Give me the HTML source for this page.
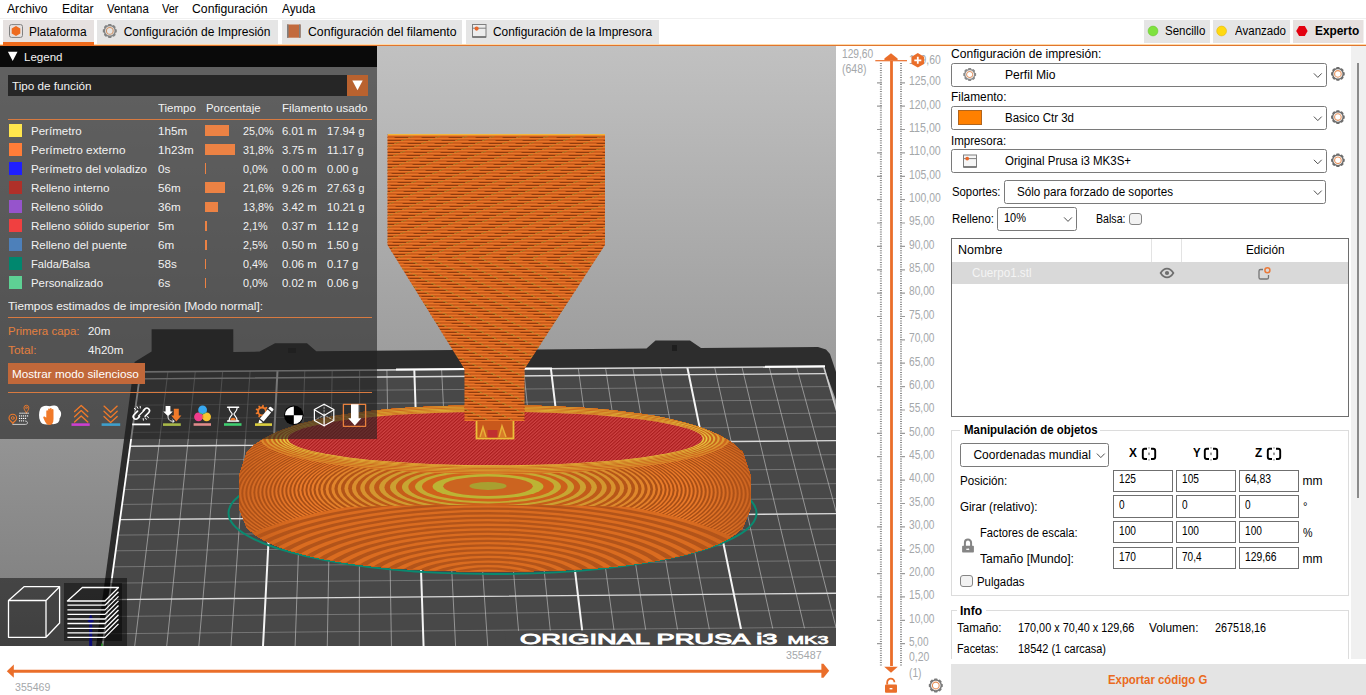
<!DOCTYPE html>
<html lang="es"><head><meta charset="utf-8"><title>PrusaSlicer</title>
<style>
html,body{margin:0;padding:0;background:#fff;overflow:hidden}
body{width:1366px;height:695px;position:relative;font-family:"Liberation Sans",sans-serif}
.t{position:absolute;white-space:pre;line-height:1em;transform-origin:0 50%;font-family:"Liberation Sans",sans-serif}
</style></head><body>
<div style="position:absolute;left:0;top:0;width:1366px;height:18px;background:#fff"></div>
<span class="t" style="left:7.0px;top:2.54px;font-size:12px;color:#000;transform:scaleX(1.0146);">Archivo</span>
<span class="t" style="left:62.3px;top:2.54px;font-size:12px;color:#000;transform:scaleX(1.0045);">Editar</span>
<span class="t" style="left:106.5px;top:2.54px;font-size:12px;color:#000;transform:scaleX(0.9467);">Ventana</span>
<span class="t" style="left:162.0px;top:2.54px;font-size:12px;color:#000;transform:scaleX(0.9159);">Ver</span>
<span class="t" style="left:192.4px;top:2.54px;font-size:12px;color:#000;transform:scaleX(1.0196);">Configuración</span>
<span class="t" style="left:282.3px;top:2.54px;font-size:12px;color:#000;transform:scaleX(0.9848);">Ayuda</span>
<div style="position:absolute;left:0;top:18px;width:1366px;height:1px;background:#f0f0f0"></div>
<div style="position:absolute;left:0;top:19px;width:1366px;height:27px;background:#fff"></div>
<div style="position:absolute;left:0;top:44px;width:1366px;height:1px;background:#ffd9a8"></div>
<div style="position:absolute;left:0;top:45px;width:1366px;height:1px;background:#e0752e"></div>
<div style="position:absolute;left:3.0px;top:20px;width:91.0px;height:24px;background:#e6e1e0"></div>
<div style="position:absolute;left:97.0px;top:20px;width:181.0px;height:24px;background:#e5e5e5"></div>
<div style="position:absolute;left:281.5px;top:20px;width:180.5px;height:24px;background:#e5e5e5"></div>
<div style="position:absolute;left:466.0px;top:20px;width:193.0px;height:24px;background:#e5e5e5"></div>
<div style="position:absolute;left:3px;top:42.3px;width:91px;height:3.4px;background:#ee6a1c"></div>
<span class="t" style="left:29.2px;top:25.74px;font-size:12px;color:#000;transform:scaleX(0.9926);">Plataforma</span>
<span class="t" style="left:123.7px;top:25.74px;font-size:12px;color:#000;">Configuración de Impresión</span>
<span class="t" style="left:307.5px;top:25.74px;font-size:12px;color:#000;transform:scaleX(1.0212);">Configuración del filamento</span>
<span class="t" style="left:492.5px;top:25.74px;font-size:12px;color:#000;transform:scaleX(0.9890);">Configuración de la Impresora</span>
<svg style="position:absolute;left:0;top:0" width="1366" height="695" viewBox="0 0 1366 695">
<rect x="9.5" y="24.6" width="13" height="12.8" rx="2" fill="none" stroke="#808080" stroke-width="1"/>
<polygon points="20.3,33.4 16.0,35.9 11.7,33.4 11.7,28.4 16.0,25.9 20.3,28.4" fill="#ee6b1f"/>
<g transform="translate(109.8 30.9)" ><path d="M-1.96 -5.72 L-1.35 -7.00 L1.35 -7.00 L1.96 -5.72 L2.66 -5.43 L4.00 -5.90 L5.90 -4.00 L5.43 -2.66 L5.72 -1.96 L7.00 -1.35 L7.00 1.35 L5.72 1.96 L5.43 2.66 L5.90 4.00 L4.00 5.90 L2.66 5.43 L1.96 5.72 L1.35 7.00 L-1.35 7.00 L-1.96 5.72 L-2.66 5.43 L-4.00 5.90 L-5.90 4.00 L-5.43 2.66 L-5.72 1.96 L-7.00 1.35 L-7.00 -1.35 L-5.72 -1.96 L-5.43 -2.66 L-5.90 -4.00 L-4.00 -5.90 L-2.66 -5.43Z M4.72 0A4.72 4.72 0 1 0 -4.72 0A4.72 4.72 0 1 0 4.72 0Z" fill="#828383" fill-rule="evenodd"/><circle r="3.38" fill="none" stroke="#cf9468" stroke-width="1.12" /></g>
<rect x="287" y="24.5" width="13.6" height="13.2" fill="#c26a3d"/><rect x="287" y="24.5" width="1.6" height="13.2" fill="#808080"/><rect x="299" y="24.5" width="1.6" height="13.2" fill="#808080"/>
<rect x="472.5" y="24.5" width="13.5" height="12.5" fill="#ececec" stroke="#7e7e7e" stroke-width="1"/><path d="M472.5 28.2H486" stroke="#7e7e7e" stroke-width="1"/><circle cx="476.6" cy="28.6" r="2.1" fill="#e8672a"/><path d="M472.5 37H486" stroke="#666" stroke-width="1.4"/>
<rect x="1144.0" y="20" width="66.0" height="23" fill="#e5e5e5"/>
<rect x="1213.0" y="20" width="77.0" height="23" fill="#e5e5e5"/>
<rect x="1293.0" y="20" width="70.5" height="23" fill="#e6e0df"/>
<circle cx="1153" cy="31" r="4.9" fill="#7fe23e" stroke="#6cc436" stroke-width="0.6"/>
<circle cx="1221.6" cy="31" r="4.9" fill="#ffd910" stroke="#e2b714" stroke-width="0.6"/>
<polygon points="1307.6,31.0 1304.8,35.9 1299.1,35.9 1296.2,31.0 1299.1,26.1 1304.8,26.1" fill="#e3000f"/>
</svg>
<span class="t" style="left:1165.4px;top:25.34px;font-size:12px;color:#000;transform:scaleX(0.9588);">Sencillo</span>
<span class="t" style="left:1234.5px;top:25.34px;font-size:12px;color:#000;transform:scaleX(0.9594);">Avanzado</span>
<span class="t" style="left:1315.2px;top:25.34px;font-size:12px;color:#000;font-weight:700;transform:scaleX(0.9891);">Experto</span>
<svg width="836" height="600" viewBox="0 46 836 600" style="position:absolute;left:0;top:46px;display:block">
<defs>
<linearGradient id="bg" x1="0" y1="46" x2="0" y2="645" gradientUnits="userSpaceOnUse"><stop offset="0" stop-color="#c1c1c1"/><stop offset="1" stop-color="#7c7c7c"/></linearGradient>
<pattern id="st" width="8" height="3" patternUnits="userSpaceOnUse"><rect width="8" height="3" fill="#ce5e1c"/><rect width="8" height="1" fill="#ea7629"/><rect y="2" width="8" height="1" fill="#8e3c0e"/></pattern>
<pattern id="dg" width="27" height="3" patternUnits="userSpaceOnUse" patternTransform="skewX(-66.8)"><rect x="0" y="1" width="2.5" height="2" fill="#b07c26"/><rect x="2.5" y="2" width="11" height="1" fill="#cc5e1c"/></pattern>
<pattern id="dg2" width="25" height="3" patternUnits="userSpaceOnUse" patternTransform="skewX(64)"><rect x="0" y="1" width="2.5" height="2" fill="#b07c26"/><rect x="2.5" y="2" width="11" height="1" fill="#cc5e1c"/></pattern>
<clipPath id="fup"><rect x="380" y="130" width="240" height="128"/></clipPath><clipPath id="flo"><rect x="380" y="258" width="240" height="170"/></clipPath>
<pattern id="redp" width="2.4" height="3" patternUnits="userSpaceOnUse" patternTransform="rotate(48)"><rect width="2.4" height="3" fill="#cf4444"/><rect width="1.15" height="3" fill="#a81c1c"/></pattern>
<radialGradient id="moire" cx="494" cy="485" r="260" gradientUnits="userSpaceOnUse" gradientTransform="translate(494 485) scale(1 0.22) translate(-494 -485)" spreadMethod="repeat">
</radialGradient>
<clipPath id="bodyclip"><path id="bodypath" d="M239.0 476.0 L247.0 452.3 L255.0 444.6 L263.0 439.2 L271.0 434.9 L279.0 431.3 L287.0 428.3 L295.0 425.6 L302.9 423.2 L310.9 421.2 L318.9 419.3 L326.9 417.6 L334.9 416.1 L342.9 414.7 L350.9 413.5 L358.9 412.4 L366.9 411.4 L374.9 410.5 L382.9 409.7 L390.9 409.0 L398.9 408.4 L406.9 407.8 L414.9 407.3 L422.9 406.9 L430.9 406.6 L438.8 406.3 L446.8 406.0 L454.8 405.8 L462.8 405.7 L470.8 405.6 L478.8 405.5 L486.8 405.5 L494.8 405.5 L502.8 405.5 L510.8 405.5 L518.8 405.6 L526.8 405.7 L534.8 405.8 L542.8 406.0 L550.8 406.3 L558.8 406.6 L566.7 406.9 L574.7 407.3 L582.7 407.8 L590.7 408.4 L598.7 409.0 L606.7 409.7 L614.7 410.5 L622.7 411.4 L630.7 412.4 L638.7 413.5 L646.7 414.7 L654.7 416.1 L662.7 417.6 L670.7 419.3 L678.7 421.2 L686.7 423.2 L694.6 425.6 L702.6 428.3 L710.6 431.3 L718.6 434.9 L726.6 439.2 L734.6 444.6 L742.6 452.3 L750.6 476.0 L750.6 508.0 L742.6 528.0 L734.6 534.8 L726.6 539.7 L718.6 543.6 L710.6 546.9 L702.6 549.7 L694.6 552.1 L686.7 554.3 L678.7 556.3 L670.7 558.0 L662.7 559.6 L654.7 561.0 L646.7 562.3 L638.7 563.5 L630.7 564.6 L622.7 565.5 L614.7 566.4 L606.7 567.2 L598.7 567.9 L590.7 568.5 L582.7 569.1 L574.7 569.6 L566.7 570.0 L558.8 570.3 L550.8 570.7 L542.8 570.9 L534.8 571.1 L526.8 571.3 L518.8 571.4 L510.8 571.5 L502.8 571.5 L494.8 571.5 L486.8 571.5 L478.8 571.5 L470.8 571.4 L462.8 571.3 L454.8 571.1 L446.8 570.9 L438.8 570.7 L430.9 570.3 L422.9 570.0 L414.9 569.6 L406.9 569.1 L398.9 568.5 L390.9 567.9 L382.9 567.2 L374.9 566.4 L366.9 565.5 L358.9 564.6 L350.9 563.5 L342.9 562.3 L334.9 561.0 L326.9 559.6 L318.9 558.0 L310.9 556.3 L302.9 554.3 L295.0 552.1 L287.0 549.7 L279.0 546.9 L271.0 543.6 L263.0 539.7 L255.0 534.8 L247.0 528.0 L239.0 508.0Z"/></clipPath>
<clipPath id="lowclip"><path d="M230 512 Q488 498 760 512 V585 H230Z"/></clipPath><clipPath id="vp"><rect x="0" y="46" width="836" height="600"/></clipPath>
<linearGradient id="sideshade" x1="238" y1="0" x2="751" y2="0" gradientUnits="userSpaceOnUse"><stop offset="0" stop-color="#b4541a" stop-opacity="0.55"/><stop offset="0.12" stop-color="#b4541a" stop-opacity="0"/><stop offset="0.88" stop-color="#b4541a" stop-opacity="0"/><stop offset="1" stop-color="#b4541a" stop-opacity="0.55"/></linearGradient></defs>
<rect x="0" y="46" width="836" height="600" fill="url(#bg)"/>
<polygon fill="#2d2d2d" points="134.5,362.0 151.6,351.5 151.6,329.2 233.3,329.2 233.3,351.9 259.7,351.6 275.0,343.2 307.0,343.2 316.3,351.2 646.5,348.5 655.5,340.5 690.0,340.5 701.0,348.0 818.0,347.1 826.0,349.5 830.0,354.0 836.0,372.0 836.0,400.0 823.7,366.6 140.4,371.9"/>
<polygon fill="#2b2b2b" points="134.5,362.0 140.4,371.9 102.3,648.0 95.8,648.0"/>
<rect x="288" y="348" width="8" height="5" fill="#1e1e1e"/><rect x="672" y="345" width="5" height="6" fill="#1e1e1e"/>
<g clip-path="url(#vp)">
<polygon fill="#484848" points="140.4,371.9 823.7,366.6 839.2,420.0 836.0,420.0 836.0,648.0 102.3,648.0"/>
<path d="M167.9 371.6L134.2 650.0M195.3 371.4L166.3 650.0M222.7 371.2L198.5 650.0M250.1 371.0L230.7 650.0M304.8 370.6L295.0 650.0M332.2 370.4L327.2 650.0M359.6 370.2L359.3 650.0M386.9 370.0L391.5 650.0M441.6 369.5L455.8 650.0M469.0 369.3L488.0 650.0M496.3 369.1L520.2 650.0M523.6 368.9L552.3 650.0M578.3 368.5L616.7 650.0M605.6 368.3L648.8 650.0M632.9 368.1L681.0 650.0M660.1 367.9L713.2 650.0M714.7 367.4L777.5 650.0M742.0 367.2L809.7 650.0M769.2 367.0L841.8 650.0M796.5 366.8L874.0 650.0" stroke="#c4c4c4" stroke-width="1" fill="none" opacity="0.62"/>
<path d="M99.4 669.2L909.6 661.8M101.8 651.3L904.4 644.1M104.3 633.8L899.4 626.6M106.6 616.5L894.4 609.6M111.3 583.1L884.7 576.3M113.5 566.8L880.0 560.2M115.7 550.8L875.4 544.3M117.9 535.1L870.9 528.7M122.1 504.4L862.0 498.3M124.2 489.5L857.7 483.5M126.2 474.9L853.5 468.9M128.2 460.5L849.3 454.6M132.1 432.4L841.2 426.7M134.0 418.7L837.3 413.1M135.8 405.2L833.4 399.8M137.7 392.0L829.5 386.6" stroke="#c4c4c4" stroke-width="1" fill="none" opacity="0.36"/>
<path d="M109.0 599.6L889.5 592.8M120.0 519.6L866.4 513.4M130.2 446.3L845.2 440.6M139.5 378.9L825.8 373.6" stroke="#dadada" stroke-width="1.4" fill="none"/>
<path d="M277.5 370.8L262.8 650.0M414.3 369.8L423.7 650.0M550.9 368.7L584.5 650.0M687.4 367.7L745.3 650.0" stroke="#f4f4f4" stroke-width="2" fill="none"/>
<path d="M140.4 371.9L823.7 366.6" stroke="#d8d8d8" stroke-width="1.6"/>
<path d="M140.4 371.9L102.0 650.0" stroke="#ffffff" stroke-width="1.8"/>
<path d="M823.7 366.6L842.2 430.0" stroke="#cfcfcf" stroke-width="1.6"/>
<path d="M396.0 369.6L464.0 369.1" stroke="#ffffff" stroke-width="2"/>
<path d="M524.0 368.6L552.0 368.4" stroke="#ffffff" stroke-width="2"/>
<path d="M765.0 366.8L825.0 366.3" stroke="#ffffff" stroke-width="2"/>
<polygon fill="#484848" points="504.8,631.0 904.4,627.4 911.7,652.0 506.4,652.0"/>
<text x="520" y="644" font-family="Liberation Sans, sans-serif" font-weight="400" font-size="14.5" fill="#fff" stroke="#fff" stroke-width="0.85" textLength="257.5" lengthAdjust="spacingAndGlyphs">ORIGINAL PRUSA i3</text>
<text x="787.5" y="644" font-family="Liberation Sans, sans-serif" font-weight="400" font-size="11.8" fill="#fff" stroke="#fff" stroke-width="0.7" textLength="41" lengthAdjust="spacingAndGlyphs">MK3</text>
</g>
<ellipse cx="492.5" cy="513" rx="264" ry="61" fill="none" stroke="#0a8a70" stroke-width="2"/>
<g clip-path="url(#bodyclip)">
<rect x="230" y="400" width="530" height="180" fill="#d9691f"/>
<ellipse cx="488" cy="507.2" rx="420.7" ry="158.5" fill="#ea7a2a"/>
<ellipse cx="488" cy="507.0" rx="418.7" ry="157.4" fill="#a64e16"/>
<ellipse cx="488" cy="506.8" rx="416.7" ry="156.3" fill="#ea7a2a"/>
<ellipse cx="488" cy="506.6" rx="414.7" ry="155.2" fill="#a64e16"/>
<ellipse cx="488" cy="506.4" rx="412.7" ry="154.1" fill="#ea7a2a"/>
<ellipse cx="488" cy="506.2" rx="410.7" ry="153.0" fill="#a64e16"/>
<ellipse cx="488" cy="506.0" rx="408.7" ry="151.9" fill="#ea7a2a"/>
<ellipse cx="488" cy="505.8" rx="406.7" ry="150.8" fill="#a64e16"/>
<ellipse cx="488" cy="505.7" rx="404.7" ry="149.7" fill="#ea7a2a"/>
<ellipse cx="488" cy="505.5" rx="402.7" ry="148.7" fill="#a64e16"/>
<ellipse cx="488" cy="505.3" rx="400.7" ry="147.6" fill="#ea7a2a"/>
<ellipse cx="488" cy="505.1" rx="398.7" ry="146.5" fill="#a64e16"/>
<ellipse cx="488" cy="504.9" rx="396.7" ry="145.4" fill="#ea7a2a"/>
<ellipse cx="488" cy="504.7" rx="394.7" ry="144.4" fill="#a64e16"/>
<ellipse cx="488" cy="504.5" rx="392.7" ry="143.3" fill="#ea7a2a"/>
<ellipse cx="488" cy="504.3" rx="390.7" ry="142.3" fill="#a64e16"/>
<ellipse cx="488" cy="504.1" rx="388.7" ry="141.2" fill="#ea7a2a"/>
<ellipse cx="488" cy="503.9" rx="386.7" ry="140.1" fill="#a64e16"/>
<ellipse cx="488" cy="503.8" rx="384.7" ry="139.1" fill="#ea7a2a"/>
<ellipse cx="488" cy="503.6" rx="382.7" ry="138.1" fill="#a64e16"/>
<ellipse cx="488" cy="503.4" rx="380.7" ry="137.0" fill="#ea7a2a"/>
<ellipse cx="488" cy="503.2" rx="378.7" ry="136.0" fill="#a64e16"/>
<ellipse cx="488" cy="503.0" rx="376.7" ry="134.9" fill="#ea7a2a"/>
<ellipse cx="488" cy="502.8" rx="374.7" ry="133.9" fill="#a64e16"/>
<ellipse cx="488" cy="502.7" rx="372.7" ry="132.9" fill="#ea7a2a"/>
<ellipse cx="488" cy="502.5" rx="370.7" ry="131.9" fill="#a64e16"/>
<ellipse cx="488" cy="502.3" rx="368.7" ry="130.8" fill="#ea7a2a"/>
<ellipse cx="488" cy="502.1" rx="366.7" ry="129.8" fill="#a64e16"/>
<ellipse cx="488" cy="502.0" rx="364.7" ry="128.8" fill="#ea7a2a"/>
<ellipse cx="488" cy="501.8" rx="362.7" ry="127.8" fill="#a64e16"/>
<ellipse cx="488" cy="501.6" rx="360.7" ry="126.8" fill="#ea7a2a"/>
<ellipse cx="488" cy="501.4" rx="358.7" ry="125.8" fill="#a64e16"/>
<ellipse cx="488" cy="501.3" rx="356.7" ry="124.8" fill="#ea7a2a"/>
<ellipse cx="488" cy="501.1" rx="354.7" ry="123.8" fill="#a64e16"/>
<ellipse cx="488" cy="500.9" rx="352.7" ry="122.8" fill="#ea7a2a"/>
<ellipse cx="488" cy="500.8" rx="350.7" ry="121.8" fill="#a64e16"/>
<ellipse cx="488" cy="500.6" rx="348.7" ry="120.8" fill="#ea7a2a"/>
<ellipse cx="488" cy="500.4" rx="346.7" ry="119.8" fill="#a64e16"/>
<ellipse cx="488" cy="500.3" rx="344.7" ry="118.8" fill="#ea7a2a"/>
<ellipse cx="488" cy="500.1" rx="342.7" ry="117.9" fill="#a64e16"/>
<ellipse cx="488" cy="499.9" rx="340.7" ry="116.9" fill="#ea7a2a"/>
<ellipse cx="488" cy="499.8" rx="338.7" ry="115.9" fill="#a64e16"/>
<ellipse cx="488" cy="499.6" rx="336.7" ry="115.0" fill="#ea7a2a"/>
<ellipse cx="488" cy="499.4" rx="334.7" ry="114.0" fill="#a64e16"/>
<ellipse cx="488" cy="499.3" rx="332.7" ry="113.0" fill="#ea7a2a"/>
<ellipse cx="488" cy="499.1" rx="330.7" ry="112.1" fill="#a64e16"/>
<ellipse cx="488" cy="499.0" rx="328.7" ry="111.1" fill="#ea7a2a"/>
<ellipse cx="488" cy="498.8" rx="326.7" ry="110.2" fill="#a64e16"/>
<ellipse cx="488" cy="498.7" rx="324.7" ry="109.2" fill="#ea7a2a"/>
<ellipse cx="488" cy="498.5" rx="322.7" ry="108.3" fill="#a64e16"/>
<ellipse cx="488" cy="498.3" rx="320.7" ry="107.3" fill="#ea7a2a"/>
<ellipse cx="488" cy="498.2" rx="318.7" ry="106.4" fill="#a64e16"/>
<ellipse cx="488" cy="498.0" rx="316.7" ry="105.5" fill="#ea7a2a"/>
<ellipse cx="488" cy="497.9" rx="314.7" ry="104.5" fill="#a64e16"/>
<ellipse cx="488" cy="497.7" rx="312.7" ry="103.6" fill="#ea7a2a"/>
<ellipse cx="488" cy="497.6" rx="310.7" ry="102.7" fill="#a64e16"/>
<ellipse cx="488" cy="497.4" rx="308.7" ry="101.8" fill="#ea7a2a"/>
<ellipse cx="488" cy="497.3" rx="306.7" ry="100.8" fill="#a64e16"/>
<ellipse cx="488" cy="497.1" rx="304.7" ry="99.9" fill="#ea7a2a"/>
<ellipse cx="488" cy="497.0" rx="302.7" ry="99.0" fill="#a64e16"/>
<ellipse cx="488" cy="496.9" rx="300.7" ry="98.1" fill="#ea7a2a"/>
<ellipse cx="488" cy="496.7" rx="298.7" ry="97.2" fill="#a64e16"/>
<ellipse cx="488" cy="496.6" rx="296.7" ry="96.3" fill="#ea7a2a"/>
<ellipse cx="488" cy="496.4" rx="294.7" ry="95.4" fill="#a64e16"/>
<ellipse cx="488" cy="496.3" rx="292.7" ry="94.5" fill="#ea7a2a"/>
<ellipse cx="488" cy="496.1" rx="290.7" ry="93.6" fill="#a64e16"/>
<ellipse cx="488" cy="496.0" rx="288.7" ry="92.7" fill="#ea7a2a"/>
<ellipse cx="488" cy="495.9" rx="286.7" ry="91.9" fill="#a64e16"/>
<ellipse cx="488" cy="495.7" rx="284.7" ry="91.0" fill="#ea7a2a"/>
<ellipse cx="488" cy="495.6" rx="282.7" ry="90.1" fill="#a64e16"/>
<ellipse cx="488" cy="495.5" rx="280.7" ry="89.2" fill="#ea7a2a"/>
<ellipse cx="488" cy="495.3" rx="278.7" ry="88.4" fill="#a64e16"/>
<ellipse cx="488" cy="495.2" rx="276.7" ry="87.5" fill="#ea7a2a"/>
<ellipse cx="488" cy="495.1" rx="274.7" ry="86.6" fill="#a64e16"/>
<ellipse cx="488" cy="494.9" rx="272.7" ry="85.8" fill="#ea7a2a"/>
<ellipse cx="488" cy="494.8" rx="270.7" ry="84.9" fill="#a64e16"/>
<ellipse cx="488" cy="494.7" rx="268.7" ry="84.1" fill="#ea7a2a"/>
<ellipse cx="488" cy="494.5" rx="266.7" ry="83.2" fill="#a64e16"/>
<ellipse cx="488" cy="494.4" rx="264.7" ry="82.4" fill="#ea7a2a"/>
<ellipse cx="488" cy="494.3" rx="262.7" ry="81.5" fill="#a64e16"/>
<ellipse cx="488" cy="494.2" rx="260.7" ry="80.7" fill="#ea7a2a"/>
<ellipse cx="488" cy="494.0" rx="258.7" ry="79.8" fill="#a64e16"/>
<ellipse cx="488" cy="493.9" rx="256.7" ry="79.0" fill="#ea7a2a"/>
<ellipse cx="488" cy="493.8" rx="254.7" ry="78.2" fill="#a64e16"/>
<ellipse cx="488" cy="493.7" rx="252.7" ry="77.4" fill="#ea7a2a"/>
<ellipse cx="488" cy="493.5" rx="250.7" ry="76.5" fill="#a64e16"/>
<ellipse cx="488" cy="493.4" rx="248.7" ry="75.7" fill="#ea7a2a"/>
<ellipse cx="488" cy="493.3" rx="246.7" ry="74.9" fill="#a64e16"/>
<ellipse cx="488" cy="493.2" rx="244.7" ry="74.1" fill="#ea7a2a"/>
<ellipse cx="488" cy="493.1" rx="242.7" ry="73.3" fill="#a64e16"/>
<ellipse cx="488" cy="493.0" rx="240.7" ry="72.5" fill="#ea7a2a"/>
<ellipse cx="488" cy="492.8" rx="238.7" ry="71.7" fill="#a64e16"/>
<ellipse cx="488" cy="492.7" rx="236.7" ry="70.9" fill="#ea7a2a"/>
<ellipse cx="488" cy="492.6" rx="234.7" ry="70.1" fill="#a64e16"/>
<ellipse cx="488" cy="492.5" rx="232.7" ry="69.3" fill="#ea7a2a"/>
<ellipse cx="488" cy="492.4" rx="230.7" ry="68.5" fill="#a64e16"/>
<ellipse cx="488" cy="492.3" rx="228.7" ry="67.7" fill="#ea7a2a"/>
<ellipse cx="488" cy="492.2" rx="226.7" ry="66.9" fill="#a64e16"/>
<ellipse cx="488" cy="492.1" rx="224.7" ry="66.1" fill="#ea7a2a"/>
<ellipse cx="488" cy="492.0" rx="222.7" ry="65.4" fill="#a64e16"/>
<ellipse cx="488" cy="491.8" rx="220.7" ry="64.6" fill="#ea7a2a"/>
<ellipse cx="488" cy="491.7" rx="218.7" ry="63.8" fill="#a64e16"/>
<ellipse cx="488" cy="491.6" rx="216.7" ry="63.1" fill="#ea7a2a"/>
<ellipse cx="488" cy="491.5" rx="214.7" ry="62.3" fill="#a64e16"/>
<ellipse cx="488" cy="491.4" rx="212.7" ry="61.5" fill="#ea7a2a"/>
<ellipse cx="488" cy="491.3" rx="210.7" ry="60.8" fill="#a64e16"/>
<ellipse cx="488" cy="491.2" rx="208.7" ry="60.0" fill="#ea7a2a"/>
<ellipse cx="488" cy="491.1" rx="206.7" ry="59.3" fill="#a64e16"/>
<ellipse cx="488" cy="491.0" rx="204.7" ry="58.5" fill="#ea7a2a"/>
<ellipse cx="488" cy="490.9" rx="202.7" ry="57.8" fill="#a64e16"/>
<ellipse cx="488" cy="490.8" rx="200.7" ry="57.1" fill="#ea7a2a"/>
<ellipse cx="488" cy="490.7" rx="198.7" ry="56.3" fill="#a64e16"/>
<ellipse cx="488" cy="490.6" rx="196.7" ry="55.6" fill="#ea7a2a"/>
<ellipse cx="488" cy="490.5" rx="194.7" ry="54.9" fill="#a64e16"/>
<ellipse cx="488" cy="490.5" rx="192.7" ry="54.1" fill="#ea7a2a"/>
<ellipse cx="488" cy="490.4" rx="190.7" ry="53.4" fill="#a64e16"/>
<ellipse cx="488" cy="490.3" rx="188.7" ry="52.7" fill="#ea7a2a"/>
<ellipse cx="488" cy="490.2" rx="186.7" ry="52.0" fill="#a64e16"/>
<ellipse cx="488" cy="490.1" rx="184.7" ry="51.3" fill="#ea7a2a"/>
<ellipse cx="488" cy="490.0" rx="182.7" ry="50.6" fill="#a64e16"/>
<ellipse cx="488" cy="489.9" rx="180.7" ry="49.9" fill="#ea7a2a"/>
<ellipse cx="488" cy="489.8" rx="178.7" ry="49.2" fill="#a64e16"/>
<ellipse cx="488" cy="489.7" rx="176.7" ry="48.4" fill="#e97c2a"/>
<ellipse cx="488" cy="489.7" rx="174.6" ry="47.7" fill="#a84f16"/>
<ellipse cx="488" cy="489.6" rx="172.4" ry="46.9" fill="#e77e2b"/>
<ellipse cx="488" cy="489.5" rx="170.0" ry="46.2" fill="#aa5016"/>
<ellipse cx="488" cy="489.4" rx="167.6" ry="45.3" fill="#e5802b"/>
<ellipse cx="488" cy="489.3" rx="165.1" ry="44.5" fill="#ab5117"/>
<ellipse cx="488" cy="489.2" rx="162.4" ry="43.6" fill="#e4822b"/>
<ellipse cx="488" cy="489.1" rx="159.6" ry="42.6" fill="#ae5217"/>
<ellipse cx="488" cy="488.9" rx="156.7" ry="41.7" fill="#e1852c"/>
<ellipse cx="488" cy="488.8" rx="153.6" ry="40.6" fill="#b05317"/>
<ellipse cx="488" cy="488.7" rx="150.4" ry="39.6" fill="#df882c"/>
<ellipse cx="488" cy="488.6" rx="147.1" ry="38.5" fill="#b25418"/>
<ellipse cx="488" cy="488.5" rx="143.6" ry="37.4" fill="#dd8b2d"/>
<ellipse cx="488" cy="488.3" rx="139.9" ry="36.2" fill="#b55518"/>
<ellipse cx="488" cy="488.2" rx="136.1" ry="35.0" fill="#da8e2e"/>
<ellipse cx="488" cy="488.1" rx="132.0" ry="33.7" fill="#b85618"/>
<ellipse cx="488" cy="488.0" rx="127.8" ry="32.4" fill="#d7922e"/>
<ellipse cx="488" cy="487.8" rx="123.4" ry="31.1" fill="#bb5819"/>
<ellipse cx="488" cy="487.7" rx="118.8" ry="29.7" fill="#d3962f"/>
<ellipse cx="488" cy="487.6" rx="113.9" ry="28.2" fill="#be5a19"/>
<ellipse cx="488" cy="487.4" rx="108.9" ry="26.7" fill="#d09b30"/>
<ellipse cx="488" cy="487.3" rx="103.5" ry="25.2" fill="#c25b1a"/>
<ellipse cx="488" cy="487.2" rx="98.0" ry="23.6" fill="#cca031"/>
<ellipse cx="488" cy="487.0" rx="92.2" ry="22.0" fill="#c65d1a"/>
<ellipse cx="488" cy="486.9" rx="86.1" ry="20.3" fill="#c7a632"/>
<ellipse cx="488" cy="486.8" rx="79.7" ry="18.6" fill="#cb601b"/>
<ellipse cx="488" cy="486.6" rx="73.0" ry="16.8" fill="#c3ac33"/>
<ellipse cx="488" cy="486.5" rx="66.0" ry="15.0" fill="#d0621b"/>
<ellipse cx="488" cy="486.4" rx="55.4" ry="12.4" fill="#bcb434"/>
<ellipse cx="488" cy="486.2" rx="44.8" ry="9.8" fill="#cc6420"/>
<ellipse cx="488" cy="486.0" rx="18.6" ry="3.9" fill="#a8a030"/>
<g clip-path="url(#lowclip)">
<ellipse cx="488" cy="582" rx="286.7" ry="86.0" fill="#da6c20"/>
<ellipse cx="488" cy="582" rx="279.0" ry="83.7" fill="#b2541a"/>
<ellipse cx="488" cy="582" rx="271.3" ry="81.4" fill="#da6c20"/>
<ellipse cx="488" cy="582" rx="263.7" ry="79.1" fill="#b2541a"/>
<ellipse cx="488" cy="582" rx="256.0" ry="76.8" fill="#da6c20"/>
<ellipse cx="488" cy="582" rx="248.3" ry="74.5" fill="#b2541a"/>
<ellipse cx="488" cy="582" rx="240.7" ry="72.2" fill="#da6c20"/>
<ellipse cx="488" cy="582" rx="233.0" ry="69.9" fill="#b2541a"/>
<ellipse cx="488" cy="582" rx="225.3" ry="67.6" fill="#da6c20"/>
<ellipse cx="488" cy="582" rx="217.7" ry="65.3" fill="#b2541a"/>
<ellipse cx="488" cy="582" rx="210.0" ry="63.0" fill="#da6c20"/>
<ellipse cx="488" cy="582" rx="202.3" ry="60.7" fill="#b2541a"/>
<ellipse cx="488" cy="582" rx="194.7" ry="58.4" fill="#da6c20"/>
<ellipse cx="488" cy="582" rx="187.0" ry="56.1" fill="#b2541a"/>
<ellipse cx="488" cy="582" rx="179.3" ry="53.8" fill="#da6c20"/>
<ellipse cx="488" cy="582" rx="171.7" ry="51.5" fill="#b2541a"/>
<ellipse cx="488" cy="582" rx="164.0" ry="49.2" fill="#da6c20"/>
<ellipse cx="488" cy="582" rx="156.3" ry="46.9" fill="#b2541a"/>
<ellipse cx="488" cy="582" rx="148.7" ry="44.6" fill="#da6c20"/>
<ellipse cx="488" cy="582" rx="141.0" ry="42.3" fill="#b2541a"/>
<ellipse cx="488" cy="582" rx="133.3" ry="40.0" fill="#da6c20"/>
<ellipse cx="488" cy="582" rx="125.7" ry="37.7" fill="#b2541a"/>
<ellipse cx="488" cy="582" rx="118.0" ry="35.4" fill="#da6c20"/>
<ellipse cx="488" cy="582" rx="110.3" ry="33.1" fill="#b2541a"/>
<ellipse cx="488" cy="582" rx="102.7" ry="30.8" fill="#da6c20"/>
<ellipse cx="488" cy="582" rx="95.0" ry="28.5" fill="#b2541a"/>
<ellipse cx="488" cy="582" rx="87.3" ry="26.2" fill="#da6c20"/>
<ellipse cx="488" cy="582" rx="79.7" ry="23.9" fill="#b2541a"/>
<ellipse cx="488" cy="582" rx="72.0" ry="21.6" fill="#da6c20"/>
<ellipse cx="488" cy="582" rx="64.3" ry="19.3" fill="#b2541a"/>
<ellipse cx="488" cy="582" rx="56.7" ry="17.0" fill="#da6c20"/>
<ellipse cx="488" cy="582" rx="49.0" ry="14.7" fill="#b2541a"/>
<ellipse cx="488" cy="582" rx="41.3" ry="12.4" fill="#da6c20"/>
<ellipse cx="488" cy="582" rx="33.7" ry="10.1" fill="#b2541a"/>
<ellipse cx="488" cy="582" rx="26.0" ry="7.8" fill="#da6c20"/>
<ellipse cx="488" cy="582" rx="18.3" ry="5.5" fill="#b2541a"/>
<ellipse cx="488" cy="582" rx="10.7" ry="3.2" fill="#da6c20"/>
</g>
<rect x="230" y="400" width="530" height="180" fill="url(#sideshade)"/>
</g>
<g clip-path="url(#bodyclip)">
<ellipse cx="495.2" cy="438.7" rx="234.5" ry="35.3" fill="#dc8a2c"/>
<ellipse cx="495.2" cy="438.7" rx="232.0" ry="34.5" fill="#cc661e"/>
<ellipse cx="495.2" cy="438.7" rx="229.5" ry="33.7" fill="#dc9a30"/>
<ellipse cx="495.2" cy="438.7" rx="227.0" ry="32.9" fill="#cc661e"/>
<ellipse cx="495.2" cy="438.7" rx="224.5" ry="32.2" fill="#dca634"/>
<ellipse cx="495.2" cy="438.7" rx="222.3" ry="31.5" fill="#c8601c"/>
<ellipse cx="495.2" cy="438.7" rx="220.1" ry="30.8" fill="#deb238"/>
<ellipse cx="495.2" cy="438.7" rx="218.0" ry="30.1" fill="#c8601c"/>
<ellipse cx="495.2" cy="438.7" rx="216.0" ry="29.4" fill="#e2bc3c"/>
<ellipse cx="495.2" cy="438.7" rx="214.1" ry="28.8" fill="#cc661e"/>
<ellipse cx="495.2" cy="438.7" rx="212.3" ry="28.2" fill="#e8c840"/>
<ellipse cx="495.2" cy="438.7" rx="210.6" ry="27.7" fill="#cc661e"/>
<ellipse cx="495.2" cy="438.7" rx="209.0" ry="27.2" fill="#e8c840"/>
</g>
<ellipse cx="495.2" cy="438.5" rx="207.5" ry="26.7" fill="url(#redp)"/>
<rect x="476.5" y="420" width="37" height="18.5" fill="#c8581c" stroke="#ecc03a" stroke-width="1.8"/>
<path d="M480 437L483 427L486 437M499 437L502 426L506 437" stroke="#e8b038" stroke-width="1.5" fill="#d87a28"/>
<rect x="487.5" y="430" width="10" height="7.5" fill="#c03030"/>
<polygon points="387.5,134.5 605.0,134.5 605.0,245.0 524.5,369.0 524.5,421.0 464.5,421.0 464.5,369.0 387.5,245.0" fill="url(#st)"/>
<polygon points="387.5,134.5 605.0,134.5 605.0,245.0 524.5,369.0 524.5,421.0 464.5,421.0 464.5,369.0 387.5,245.0" fill="url(#dg)" clip-path="url(#fup)"/>
<polygon points="387.5,134.5 605.0,134.5 605.0,245.0 524.5,369.0 524.5,421.0 464.5,421.0 464.5,369.0 387.5,245.0" fill="url(#dg2)" clip-path="url(#flo)"/>
<path d="M388 134.6H605" stroke="#f2b63a" stroke-width="1.4"/>
</svg>
<div style="position:absolute;left:0;top:46px;width:377px;height:393px;background:rgba(34,34,34,0.6)"></div>
<div style="position:absolute;left:0;top:46px;width:377px;height:20.5px;background:#0a0a0a"></div>
<div style="position:absolute;left:8px;top:75px;width:339px;height:21px;background:#262626"></div>
<div style="position:absolute;left:347px;top:75px;width:21px;height:21px;background:#b9622f"></div>
<svg style="position:absolute;left:0;top:0" width="380" height="445" viewBox="0 0 380 445"><polygon points="7.9,51.7 17.5,51.7 12.7,60.9" fill="#fff"/><polygon points="352.3,80.5 362.7,80.5 357.5,90.3" fill="#fff"/></svg>
<span class="t" style="left:24.3px;top:51.83px;font-size:10.6px;color:#f2f2f2;transform:scaleX(1.0888);">Legend</span>
<span class="t" style="left:12.3px;top:80.73px;font-size:10.6px;color:#f2f2f2;transform:scaleX(1.1034);">Tipo de función</span>
<span class="t" style="left:158.4px;top:102.73px;font-size:10.6px;color:#f2f2f2;transform:scaleX(1.0819);">Tiempo</span>
<span class="t" style="left:205.6px;top:102.73px;font-size:10.6px;color:#f2f2f2;transform:scaleX(1.0779);">Porcentaje</span>
<span class="t" style="left:282.3px;top:102.73px;font-size:10.6px;color:#f2f2f2;transform:scaleX(1.0916);">Filamento usado</span>
<div style="position:absolute;left:8px;top:119px;width:364px;height:1px;background:#d87a40"></div>
<div style="position:absolute;left:8.8px;top:123.8px;width:13.3px;height:13.2px;background:#ffe64d"></div>
<span class="t" style="left:31.0px;top:125.73px;font-size:10.6px;color:#f2f2f2;transform:scaleX(1.0900);">Perímetro</span>
<span class="t" style="left:158.4px;top:125.73px;font-size:10.6px;color:#f2f2f2;transform:scaleX(1.1000);">1h5m</span>
<div style="position:absolute;left:205px;top:125.3px;width:24px;height:10.4px;background:#ec8244"></div>
<span class="t" style="left:243.4px;top:125.73px;font-size:10.6px;color:#f2f2f2;transform:scaleX(1.0200);">25,0%</span>
<span class="t" style="left:281.7px;top:125.73px;font-size:10.6px;color:#f2f2f2;transform:scaleX(1.0700);">6.01 m</span>
<span class="t" style="left:327.4px;top:125.73px;font-size:10.6px;color:#f2f2f2;transform:scaleX(1.0600);">17.94 g</span>
<div style="position:absolute;left:8.8px;top:142.8px;width:13.3px;height:13.2px;background:#ff7d38"></div>
<span class="t" style="left:31.0px;top:144.78px;font-size:10.6px;color:#f2f2f2;transform:scaleX(1.1144);">Perímetro externo</span>
<span class="t" style="left:158.4px;top:144.78px;font-size:10.6px;color:#f2f2f2;transform:scaleX(1.1000);">1h23m</span>
<div style="position:absolute;left:205px;top:144.3px;width:30px;height:10.4px;background:#ec8244"></div>
<span class="t" style="left:243.4px;top:144.78px;font-size:10.6px;color:#f2f2f2;transform:scaleX(1.0200);">31,8%</span>
<span class="t" style="left:281.7px;top:144.78px;font-size:10.6px;color:#f2f2f2;transform:scaleX(1.0700);">3.75 m</span>
<span class="t" style="left:327.4px;top:144.78px;font-size:10.6px;color:#f2f2f2;transform:scaleX(1.0600);">11.17 g</span>
<div style="position:absolute;left:8.8px;top:161.9px;width:13.3px;height:13.2px;background:#1f1fff"></div>
<span class="t" style="left:31.0px;top:163.83px;font-size:10.6px;color:#f2f2f2;transform:scaleX(1.1005);">Perímetro del voladizo</span>
<span class="t" style="left:158.4px;top:163.83px;font-size:10.6px;color:#f2f2f2;transform:scaleX(1.1000);">0s</span>
<div style="position:absolute;left:205px;top:163.4px;width:1px;height:10.4px;background:#ec8244"></div>
<span class="t" style="left:243.4px;top:163.83px;font-size:10.6px;color:#f2f2f2;transform:scaleX(1.0200);">0,0%</span>
<span class="t" style="left:281.7px;top:163.83px;font-size:10.6px;color:#f2f2f2;transform:scaleX(1.0700);">0.00 m</span>
<span class="t" style="left:327.4px;top:163.83px;font-size:10.6px;color:#f2f2f2;transform:scaleX(1.0600);">0.00 g</span>
<div style="position:absolute;left:8.8px;top:180.9px;width:13.3px;height:13.2px;background:#b03029"></div>
<span class="t" style="left:31.0px;top:182.88px;font-size:10.6px;color:#f2f2f2;transform:scaleX(1.1015);">Relleno interno</span>
<span class="t" style="left:158.4px;top:182.88px;font-size:10.6px;color:#f2f2f2;transform:scaleX(1.1000);">56m</span>
<div style="position:absolute;left:205px;top:182.4px;width:20px;height:10.4px;background:#ec8244"></div>
<span class="t" style="left:243.4px;top:182.88px;font-size:10.6px;color:#f2f2f2;transform:scaleX(1.0200);">21,6%</span>
<span class="t" style="left:281.7px;top:182.88px;font-size:10.6px;color:#f2f2f2;transform:scaleX(1.0700);">9.26 m</span>
<span class="t" style="left:327.4px;top:182.88px;font-size:10.6px;color:#f2f2f2;transform:scaleX(1.0600);">27.63 g</span>
<div style="position:absolute;left:8.8px;top:200.0px;width:13.3px;height:13.2px;background:#9654cc"></div>
<span class="t" style="left:31.0px;top:201.93px;font-size:10.6px;color:#f2f2f2;transform:scaleX(1.0817);">Relleno sólido</span>
<span class="t" style="left:158.4px;top:201.93px;font-size:10.6px;color:#f2f2f2;transform:scaleX(1.1000);">36m</span>
<div style="position:absolute;left:205px;top:201.5px;width:13px;height:10.4px;background:#ec8244"></div>
<span class="t" style="left:243.4px;top:201.93px;font-size:10.6px;color:#f2f2f2;transform:scaleX(1.0200);">13,8%</span>
<span class="t" style="left:281.7px;top:201.93px;font-size:10.6px;color:#f2f2f2;transform:scaleX(1.0700);">3.42 m</span>
<span class="t" style="left:327.4px;top:201.93px;font-size:10.6px;color:#f2f2f2;transform:scaleX(1.0600);">10.21 g</span>
<div style="position:absolute;left:8.8px;top:219.1px;width:13.3px;height:13.2px;background:#f04040"></div>
<span class="t" style="left:31.0px;top:220.98px;font-size:10.6px;color:#f2f2f2;transform:scaleX(1.0996);">Relleno sólido superior</span>
<span class="t" style="left:158.4px;top:220.98px;font-size:10.6px;color:#f2f2f2;transform:scaleX(1.1000);">5m</span>
<div style="position:absolute;left:205px;top:220.6px;width:2px;height:10.4px;background:#ec8244"></div>
<span class="t" style="left:243.4px;top:220.98px;font-size:10.6px;color:#f2f2f2;transform:scaleX(1.0200);">2,1%</span>
<span class="t" style="left:281.7px;top:220.98px;font-size:10.6px;color:#f2f2f2;transform:scaleX(1.0700);">0.37 m</span>
<span class="t" style="left:327.4px;top:220.98px;font-size:10.6px;color:#f2f2f2;transform:scaleX(1.0600);">1.12 g</span>
<div style="position:absolute;left:8.8px;top:238.1px;width:13.3px;height:13.2px;background:#4d80ba"></div>
<span class="t" style="left:31.0px;top:240.03px;font-size:10.6px;color:#f2f2f2;transform:scaleX(1.0865);">Relleno del puente</span>
<span class="t" style="left:158.4px;top:240.03px;font-size:10.6px;color:#f2f2f2;transform:scaleX(1.1000);">6m</span>
<div style="position:absolute;left:205px;top:239.6px;width:2px;height:10.4px;background:#ec8244"></div>
<span class="t" style="left:243.4px;top:240.03px;font-size:10.6px;color:#f2f2f2;transform:scaleX(1.0200);">2,5%</span>
<span class="t" style="left:281.7px;top:240.03px;font-size:10.6px;color:#f2f2f2;transform:scaleX(1.0700);">0.50 m</span>
<span class="t" style="left:327.4px;top:240.03px;font-size:10.6px;color:#f2f2f2;transform:scaleX(1.0600);">1.50 g</span>
<div style="position:absolute;left:8.8px;top:257.1px;width:13.3px;height:13.2px;background:#00876e"></div>
<span class="t" style="left:31.0px;top:259.08px;font-size:10.6px;color:#f2f2f2;transform:scaleX(1.0545);">Falda/Balsa</span>
<span class="t" style="left:158.4px;top:259.08px;font-size:10.6px;color:#f2f2f2;transform:scaleX(1.1000);">58s</span>
<div style="position:absolute;left:205px;top:258.6px;width:1px;height:10.4px;background:#ec8244"></div>
<span class="t" style="left:243.4px;top:259.08px;font-size:10.6px;color:#f2f2f2;transform:scaleX(1.0200);">0,4%</span>
<span class="t" style="left:281.7px;top:259.08px;font-size:10.6px;color:#f2f2f2;transform:scaleX(1.0700);">0.06 m</span>
<span class="t" style="left:327.4px;top:259.08px;font-size:10.6px;color:#f2f2f2;transform:scaleX(1.0600);">0.17 g</span>
<div style="position:absolute;left:8.8px;top:276.2px;width:13.3px;height:13.2px;background:#5ed194"></div>
<span class="t" style="left:31.0px;top:278.13px;font-size:10.6px;color:#f2f2f2;transform:scaleX(1.0724);">Personalizado</span>
<span class="t" style="left:158.4px;top:278.13px;font-size:10.6px;color:#f2f2f2;transform:scaleX(1.1000);">6s</span>
<div style="position:absolute;left:205px;top:277.7px;width:1px;height:10.4px;background:#ec8244"></div>
<span class="t" style="left:243.4px;top:278.13px;font-size:10.6px;color:#f2f2f2;transform:scaleX(1.0200);">0,0%</span>
<span class="t" style="left:281.7px;top:278.13px;font-size:10.6px;color:#f2f2f2;transform:scaleX(1.0700);">0.02 m</span>
<span class="t" style="left:327.4px;top:278.13px;font-size:10.6px;color:#f2f2f2;transform:scaleX(1.0600);">0.06 g</span>
<span class="t" style="left:8.0px;top:301.33px;font-size:10.6px;color:#f2f2f2;transform:scaleX(1.1152);">Tiempos estimados de impresión [Modo normal]:</span>
<div style="position:absolute;left:8px;top:317px;width:364px;height:1px;background:#d87a40"></div>
<span class="t" style="left:8.0px;top:326.33px;font-size:10.6px;color:#e5803e;transform:scaleX(1.0841);">Primera capa:</span>
<span class="t" style="left:88.0px;top:326.33px;font-size:10.6px;color:#f2f2f2;transform:scaleX(1.0820);">20m</span>
<span class="t" style="left:8.0px;top:345.03px;font-size:10.6px;color:#e5803e;transform:scaleX(1.1252);">Total:</span>
<span class="t" style="left:88.0px;top:345.03px;font-size:10.6px;color:#f2f2f2;transform:scaleX(1.0955);">4h20m</span>
<div style="position:absolute;left:7.8px;top:363px;width:137.5px;height:20.7px;background:#c1683a"></div>
<span class="t" style="left:12.2px;top:368.73px;font-size:10.6px;color:#fff;transform:scaleX(1.1044);">Mostrar modo silencioso</span>
<div style="position:absolute;left:8px;top:392px;width:364px;height:1px;background:#d87a40"></div>
<svg style="position:absolute;left:0;top:395px" width="380" height="45" viewBox="0 395 380 45" fill="none" stroke-linecap="round" stroke-linejoin="round"><path d="M12.8 423.6C10.9 419.8 9.0 421.4 9.0 418.0A3.8 3.8 0 1 1 16.6 418.0C16.6 421.4 14.7 419.8 12.8 423.6Z" stroke="#f07a2a" stroke-width="1.1"/><circle cx="12.8" cy="418.0" r="1.4" stroke="#f07a2a" stroke-width="0.9"/><path d="M26.4 412.9C25.2 410.5 24.0 409.9 24.0 407.7A2.4 2.4 0 1 1 28.8 407.7C28.8 409.9 27.6 410.5 26.4 412.9Z" stroke="#f07a2a" stroke-width="0.9"/><circle cx="26.4" cy="407.7" r="0.9" stroke="#f07a2a" stroke-width="0.7"/><path d="M20 413.2H28.6M19.5 415.9H28.6M19.5 418.4H26M19.5 420.8H25" stroke="#fff" stroke-width="1.3" stroke-dasharray="0.1 1.9"/><path d="M12.8 424.4H25.5C28.2 424.4 28.2 421 25.5 421" stroke="#d8d8d8" stroke-width="0.9"/><path d="M40 409.5C41 405.5 46 405 50 406.2C54 404.3 59 405.8 58.8 409.5C62 411.5 61.6 416 59.5 418.5C60 422.5 56 424.8 51 424C46 425 41 424.6 40.2 421C38.6 417.5 38.8 412.5 40 409.5Z" fill="#fff"/><path d="M46.3 417.5V411.2A0.9 0.9 0 0 1 48.1 411.2V409.5A0.9 0.9 0 0 1 49.9 409.5V409A0.9 0.9 0 0 1 51.7 409V410A0.9 0.9 0 0 1 53.5 410V419C53.5 423 52 425 49.5 425C47.5 425 46.3 424 45 421.5L43.3 417.8C42.9 416.6 44.3 415.9 45.1 416.9Z" fill="#f07a2a"/><path d="M74.6 411.5L81.2 405.4L87.8 411.5" stroke="#f07a2a" stroke-width="1.3"/><path d="M74.6 416.7L81.2 410.6L87.8 416.7" stroke="#f07a2a" stroke-width="1.3"/><path d="M74.6 422.0L81.2 415.9L87.8 422.0" stroke="#f07a2a" stroke-width="1.3"/><path d="M71.5 424.6H89.7" stroke="#cd3fd0" stroke-width="2.6" stroke-linecap="butt"/><path d="M104 406.1L110.6 412.2L117.2 406.1" stroke="#f07a2a" stroke-width="1.3"/><path d="M104 411.3L110.6 417.4L117.2 411.3" stroke="#f07a2a" stroke-width="1.3"/><path d="M104 416.4L110.6 422.5L117.2 416.4" stroke="#f07a2a" stroke-width="1.3"/><path d="M101.6 424.6H120.2" stroke="#3f9fcb" stroke-width="2.6" stroke-linecap="butt"/><g stroke="#fff" stroke-width="1.6"><path d="M139.5 416.6L137.7 418.4A2.6 2.6 0 0 1 134 414.7L137.6 411.1"/><path d="M143.3 410.6L145 408.9A2.6 2.6 0 0 1 148.7 412.6L145.1 416.2"/><path d="M138.6 416L144.2 410.4" stroke-width="1.3"/></g><path d="M137 406.6L137.9 408.3M134.3 408.4L135.9 409.6M140.2 406.4L140.3 408M146.3 419.3L145.3 417.8M148.6 417.4L147 416.4M143.4 420.2L143.2 418.6" stroke="#fff" stroke-width="1"/><path d="M132.2 424.4H150.2" stroke="#fff" stroke-width="1.8" stroke-linecap="butt"/><path d="M165.6 406H170.4V411.4H172.8L168 416.2L163.2 411.4H165.6Z" fill="#fff"/><path d="M173.8 408.8H178.8V415.4H181.4L176.3 421.6L171.2 415.4H173.8Z" fill="#f07a2a"/><path d="M168 416.5C168 420.2 170.5 421.5 173.5 421.3" stroke="#fff" stroke-width="1"/><path d="M172.6 420L174.3 421.3L172.7 422.6" stroke="#fff" stroke-width="0.9"/><path d="M163 424.6H180.8" stroke="#a8b848" stroke-width="2.6" stroke-linecap="butt"/><circle cx="198.5" cy="416.8" r="4.4" fill="#f03c8c"/><circle cx="206.6" cy="416.8" r="4.4" fill="#f7c431"/><circle cx="202.6" cy="409.9" r="4.4" fill="#38a8f0"/><path d="M202.6 414.2C204 414.2 205.3 413.6 206 412.6C204.4 412.4 203.2 413.2 202.6 414.2C202 413.2 200.6 412.4 199.2 412.6C199.9 413.6 201.2 414.2 202.6 414.2Z" fill="#5cb04a"/><path d="M202.6 414.3C203.3 415.2 203.6 416.6 203.3 418C202.9 419 202.3 419 201.9 418C201.6 416.6 201.9 415.2 202.6 414.3Z" fill="#e8703a"/><path d="M193.6 424.5H211" stroke="#e08c8c" stroke-width="2.6" stroke-linecap="butt"/><path d="M227.6 407.3H238.6M227.6 420.9H238.6" stroke="#fff" stroke-width="1.5"/><path d="M229 407.5C229 411.5 232.2 412.5 232.2 414.1C232.2 415.7 229 416.8 229 420.7M237.2 407.5C237.2 411.5 234 412.5 234 414.1C234 415.7 237.2 416.8 237.2 420.7" stroke="#fff" stroke-width="1.2"/><path d="M230.2 420.2C230.6 418.6 232 417.8 233.1 417.8C234.2 417.8 235.6 418.6 236 420.2Z" fill="#f07a2a"/><path d="M224 424.5H241.5" stroke="#3fcf70" stroke-width="2.6" stroke-linecap="butt"/><path d="M268.57 410.81 L268.57 411.99 L266.69 412.44 L266.26 413.61 L267.42 415.17 L266.65 416.08 L264.92 415.21 L263.84 415.83 L263.73 417.77 L262.56 417.98 L261.79 416.20 L260.56 415.98 L259.23 417.39 L258.20 416.80 L258.75 414.94 L257.95 413.98 L256.03 414.21 L255.62 413.09 L257.24 412.02 L257.24 410.78 L255.62 409.71 L256.03 408.59 L257.95 408.82 L258.75 407.86 L258.20 406.00 L259.23 405.41 L260.56 406.82 L261.79 406.60 L262.56 404.82 L263.73 405.03 L263.84 406.97 L264.92 407.59 L266.65 406.72 L267.42 407.63 L266.26 409.19 L266.69 410.36 Z M265 411.4 A3 3 0 1 0 259 411.4 A3 3 0 1 0 265 411.4Z" fill="#f07a2a" fill-rule="evenodd"/><path d="M257.5 421.8L267.5 409.5L272 413.3L262 425.2Z" fill="#2a2a2a"/><path d="M268.3 408.6L269.6 407.1A1 1 0 0 1 271 407L273.2 408.8A1 1 0 0 1 273.3 410.2L272 411.7Z" fill="#fff"/><path d="M267.5 409.6L271.2 412.6L263.6 421.6L259.9 418.6Z" fill="#fff"/><path d="M259.3 419.5L262.8 422.4L258.3 423.8Z" fill="#fff"/><path d="M255 424.6H272" stroke="#dccf3e" stroke-width="2.6" stroke-linecap="butt"/><circle cx="293.8" cy="415.2" r="9.8" fill="#000"/><path d="M293.8 415.2V406.4A8.8 8.8 0 0 0 285.0 415.2Z" fill="#fff"/><path d="M293.8 415.2V424.0A8.8 8.8 0 0 0 302.6 415.2Z" fill="#fff"/><g stroke="#fff" stroke-width="1.2"><path d="M324.1 404.2L333.8 409.6L333.8 420.4L324.1 425.8L314.4 420.4L314.4 409.6Z"/><path d="M314.4 409.8L324.1 415.4L333.8 409.8M324.1 415.4V425.8"/><path d="M324.1 404.2V415.0M324.1 415.0L314.4 420.4M324.1 415.0L333.8 420.4" stroke-width="0.7" stroke-dasharray="1.5 1.5" opacity="0.8"/></g><rect x="343.4" y="404.4" width="22.2" height="21.9" stroke="#e8803c" stroke-width="1.3"/><path d="M351 404.2H358.6V418.3H361.4L354.8 425.5L348.2 418.3H351Z" fill="#fff"/></svg>
<div style="position:absolute;left:0;top:578px;width:127px;height:68px;background:rgba(0,0,0,0.48)"></div>
<div style="position:absolute;left:64px;top:583px;width:58px;height:57.5px;background:rgba(0,0,0,0.42)"></div>
<svg style="position:absolute;left:0;top:570px" width="140" height="76" viewBox="0 570 140 76" fill="none" stroke="#fff" stroke-width="1.3" stroke-linejoin="round"><path d="M90.7 646V620" stroke="#0c0c74" stroke-width="3"/><path d="M87.5 622L90.7 613.5L94 622Z" fill="#0c0c74" stroke="none"/><path d="M102 646V643.5" stroke="#1d8f1d" stroke-width="1.5"/><path d="M8.5 600.5H46V637.3H8.5ZM8.5 600.5L24 586.7H59.6L46 600.5M59.6 586.7V623L46 637.3"/><path d="M67.4 601L82.3 587.5H118.5L105 601Z"/><path d="M67.4 605.2H105L118.5 591.7"/><path d="M67.4 609.9H105L118.5 596.4"/><path d="M67.4 614.4H105L118.5 600.9"/><path d="M67.4 619.0H105L118.5 605.5"/><path d="M67.4 623.5H105L118.5 610.0"/><path d="M67.4 628.3H105L118.5 614.8"/><path d="M67.4 632.8H105L118.5 619.3"/><path d="M67.4 637.4H105L118.5 623.9"/></svg>
<div style="position:absolute;left:0;top:646px;width:950px;height:49px;background:#fff"></div>
<div style="position:absolute;left:836px;top:46px;width:114px;height:649px;background:#fff"></div>
<span class="t" style="left:909.2px;top:54.14px;font-size:12px;color:#a4a7aa;transform:scaleX(0.8637);">129,60</span>
<svg style="position:absolute;left:0;top:0" width="960" height="695" viewBox="0 0 960 695"><path d="M12 671.3H823" stroke="#ea6e2a" stroke-width="3"/><path d="M6.8 671.2L13.8 664.5V677.8Z" fill="#ea6e2a"/><path d="M821.4 663.8H823.5L829.2 670.8L823.5 677.8H821.4Z" fill="#ea6e2a"/><path d="M891.5 61V666" stroke="#ea6e2a" stroke-width="2.8"/><path d="M875.3 60.7H907" stroke="#ea6e2a" stroke-width="1.2"/><path d="M884.4 60V58.6L891 53.2L897.6 58.6V60Z" fill="#ea6e2a"/><path d="M884.2 666.7H897.8L891 672.8Z" fill="#ea6e2a"/><path d="M880.9 63V666.7M901 63V666.7" stroke="#8c8c8c" stroke-width="2" stroke-dasharray="1 1.34"/><path d="M877 82.8H882M900 82.8H905M877 106.2H882M900 106.2H905M877 129.5H882M900 129.5H905M877 152.9H882M900 152.9H905M877 176.3H882M900 176.3H905M877 199.7H882M900 199.7H905M877 223.0H882M900 223.0H905M877 246.4H882M900 246.4H905M877 269.8H882M900 269.8H905M877 293.1H882M900 293.1H905M877 316.5H882M900 316.5H905M877 339.9H882M900 339.9H905M877 363.2H882M900 363.2H905M877 386.6H882M900 386.6H905M877 410.0H882M900 410.0H905M877 433.4H882M900 433.4H905M877 456.7H882M900 456.7H905M877 480.1H882M900 480.1H905M877 503.5H882M900 503.5H905M877 526.8H882M900 526.8H905M877 550.2H882M900 550.2H905M877 573.6H882M900 573.6H905M877 596.9H882M900 596.9H905M877 620.3H882M900 620.3H905M877 643.7H882M900 643.7H905" stroke="#9a9a9a" stroke-width="1.2"/><polygon points="924.0,63.9 917.8,67.5 911.6,63.9 911.6,56.7 917.8,53.1 924.0,56.7" fill="#ea6e2a"/><path d="M914.3 60.3H921.3M917.8 56.8V63.8" stroke="#fff" stroke-width="1.8"/><path d="M887.2 684.5V682.3A3.6 3.6 0 0 1 894.4 682.3" fill="none" stroke="#ea6e2a" stroke-width="1.8"/><rect x="885" y="684.5" width="12" height="8.3" rx="1" fill="#ea6e2a"/><path d="M889.6 688.7H892.4" stroke="#fff" stroke-width="1.4"/><g transform="translate(935.8 685.5)" ><path d="M-1.96 -5.72 L-1.35 -7.00 L1.35 -7.00 L1.96 -5.72 L2.66 -5.43 L4.00 -5.90 L5.90 -4.00 L5.43 -2.66 L5.72 -1.96 L7.00 -1.35 L7.00 1.35 L5.72 1.96 L5.43 2.66 L5.90 4.00 L4.00 5.90 L2.66 5.43 L1.96 5.72 L1.35 7.00 L-1.35 7.00 L-1.96 5.72 L-2.66 5.43 L-4.00 5.90 L-5.90 4.00 L-5.43 2.66 L-5.72 1.96 L-7.00 1.35 L-7.00 -1.35 L-5.72 -1.96 L-5.43 -2.66 L-5.90 -4.00 L-4.00 -5.90 L-2.66 -5.43Z M4.72 0A4.72 4.72 0 1 0 -4.72 0A4.72 4.72 0 1 0 4.72 0Z" fill="#7a7a7a" fill-rule="evenodd"/><circle r="3.38" fill="none" stroke="#e8915a" stroke-width="1.12" /></g></svg>
<span class="t" style="left:15.4px;top:681.69px;font-size:11px;color:#a4a7aa;transform:scaleX(0.9614);">355469</span>
<span class="t" style="left:785.6px;top:649.69px;font-size:11px;color:#a4a7aa;transform:scaleX(0.9695);">355487</span>
<span class="t" style="left:842.3px;top:48.14px;font-size:12px;color:#a4a7aa;transform:scaleX(0.8501);">129,60</span>
<span class="t" style="left:842.3px;top:63.14px;font-size:12px;color:#a4a7aa;transform:scaleX(0.8745);">(648)</span>
<span class="t" style="left:909.2px;top:75.14px;font-size:12px;color:#a4a7aa;transform:scaleX(0.8637);">125,00</span>
<span class="t" style="left:909.2px;top:98.51px;font-size:12px;color:#a4a7aa;transform:scaleX(0.8637);">120,00</span>
<span class="t" style="left:909.2px;top:121.88px;font-size:12px;color:#a4a7aa;transform:scaleX(0.8852);">115,00</span>
<span class="t" style="left:909.2px;top:145.25px;font-size:12px;color:#a4a7aa;transform:scaleX(0.8852);">110,00</span>
<span class="t" style="left:909.2px;top:168.62px;font-size:12px;color:#a4a7aa;transform:scaleX(0.8637);">105,00</span>
<span class="t" style="left:909.2px;top:191.99px;font-size:12px;color:#a4a7aa;transform:scaleX(0.8637);">100,00</span>
<span class="t" style="left:909.2px;top:215.36px;font-size:12px;color:#a4a7aa;transform:scaleX(0.8491);">95,00</span>
<span class="t" style="left:909.2px;top:238.73px;font-size:12px;color:#a4a7aa;transform:scaleX(0.8491);">90,00</span>
<span class="t" style="left:909.2px;top:262.10px;font-size:12px;color:#a4a7aa;transform:scaleX(0.8491);">85,00</span>
<span class="t" style="left:909.2px;top:285.47px;font-size:12px;color:#a4a7aa;transform:scaleX(0.8491);">80,00</span>
<span class="t" style="left:909.2px;top:308.84px;font-size:12px;color:#a4a7aa;transform:scaleX(0.8491);">75,00</span>
<span class="t" style="left:909.2px;top:332.21px;font-size:12px;color:#a4a7aa;transform:scaleX(0.8491);">70,00</span>
<span class="t" style="left:909.2px;top:355.58px;font-size:12px;color:#a4a7aa;transform:scaleX(0.8491);">65,00</span>
<span class="t" style="left:909.2px;top:378.95px;font-size:12px;color:#a4a7aa;transform:scaleX(0.8491);">60,00</span>
<span class="t" style="left:909.2px;top:402.32px;font-size:12px;color:#a4a7aa;transform:scaleX(0.8491);">55,00</span>
<span class="t" style="left:909.2px;top:425.69px;font-size:12px;color:#a4a7aa;transform:scaleX(0.8491);">50,00</span>
<span class="t" style="left:909.2px;top:449.06px;font-size:12px;color:#a4a7aa;transform:scaleX(0.8491);">45,00</span>
<span class="t" style="left:909.2px;top:472.43px;font-size:12px;color:#a4a7aa;transform:scaleX(0.8491);">40,00</span>
<span class="t" style="left:909.2px;top:495.80px;font-size:12px;color:#a4a7aa;transform:scaleX(0.8491);">35,00</span>
<span class="t" style="left:909.2px;top:519.17px;font-size:12px;color:#a4a7aa;transform:scaleX(0.8491);">30,00</span>
<span class="t" style="left:909.2px;top:542.54px;font-size:12px;color:#a4a7aa;transform:scaleX(0.8491);">25,00</span>
<span class="t" style="left:909.2px;top:565.91px;font-size:12px;color:#a4a7aa;transform:scaleX(0.8491);">20,00</span>
<span class="t" style="left:909.2px;top:589.28px;font-size:12px;color:#a4a7aa;transform:scaleX(0.8491);">15,00</span>
<span class="t" style="left:909.2px;top:612.65px;font-size:12px;color:#a4a7aa;transform:scaleX(0.8491);">10,00</span>
<span class="t" style="left:909.2px;top:636.02px;font-size:12px;color:#a4a7aa;transform:scaleX(0.8348);">5,00</span>
<span class="t" style="left:908.8px;top:651.14px;font-size:12px;color:#a4a7aa;transform:scaleX(0.8690);">0,20</span>
<span class="t" style="left:908.8px;top:667.14px;font-size:12px;color:#a4a7aa;transform:scaleX(0.8520);">(1)</span>
<div style="position:absolute;left:950px;top:46px;width:416px;height:649px;background:#fff"></div>
<div style="position:absolute;left:1351px;top:46px;width:15px;height:613px;background:#f0f0f0"></div>
<div style="position:absolute;left:1357px;top:63px;width:2px;height:435px;background:#8b8b8b"></div>
<span class="t" style="left:951.2px;top:47.84px;font-size:12px;color:#000;transform:scaleX(1.0059);">Configuración de impresión:</span>
<div style="position:absolute;left:951.0px;top:63.0px;width:375.5px;height:23.9px;border:1px solid #7a7a7a;border-radius:2.5px;box-sizing:border-box;background:#fff"></div>
<span class="t" style="left:1005.0px;top:68.54px;font-size:12px;color:#000;transform:scaleX(1.0097);">Perfil Mio</span>
<span class="t" style="left:951.2px;top:90.84px;font-size:12px;color:#000;transform:scaleX(0.9905);">Filamento:</span>
<div style="position:absolute;left:951.0px;top:106.2px;width:375.5px;height:23.6px;border:1px solid #7a7a7a;border-radius:2.5px;box-sizing:border-box;background:#fff"></div>
<div style="position:absolute;left:958px;top:110.3px;width:24px;height:15.2px;background:#ff8000;border:1px solid #b0651e;box-sizing:border-box"></div>
<span class="t" style="left:1005.0px;top:111.54px;font-size:12px;color:#000;transform:scaleX(0.9579);">Basico Ctr 3d</span>
<span class="t" style="left:951.2px;top:134.64px;font-size:12px;color:#000;transform:scaleX(0.9624);">Impresora:</span>
<div style="position:absolute;left:951.0px;top:149.3px;width:375.5px;height:23.6px;border:1px solid #7a7a7a;border-radius:2.5px;box-sizing:border-box;background:#fff"></div>
<span class="t" style="left:1005.0px;top:154.64px;font-size:12px;color:#000;transform:scaleX(0.9565);">Original Prusa i3 MK3S+</span>
<span class="t" style="left:951.8px;top:185.84px;font-size:12px;color:#000;transform:scaleX(0.9440);">Soportes:</span>
<div style="position:absolute;left:1004.2px;top:180.4px;width:322.3px;height:23.8px;border:1px solid #7a7a7a;border-radius:2.5px;box-sizing:border-box;background:#fff"></div>
<span class="t" style="left:1016.8px;top:185.84px;font-size:12px;color:#000;transform:scaleX(0.9703);">Sólo para forzado de soportes</span>
<span class="t" style="left:951.8px;top:212.54px;font-size:12px;color:#000;transform:scaleX(0.9539);">Relleno:</span>
<div style="position:absolute;left:997.3px;top:207.2px;width:79.4px;height:23.8px;border:1px solid #7a7a7a;border-radius:2.5px;box-sizing:border-box;background:#fff"></div>
<span class="t" style="left:1003.5px;top:211.64px;font-size:12px;color:#000;transform:scaleX(0.9155);">10%</span>
<span class="t" style="left:1096.0px;top:212.54px;font-size:12px;color:#000;transform:scaleX(0.8843);">Balsa:</span>
<div style="position:absolute;left:1129.3px;top:212.7px;width:12.3px;height:12.3px;border:1px solid #858585;border-radius:3px;box-sizing:border-box;background:#f2f2f2"></div>
<div style="position:absolute;left:951px;top:237.5px;width:397.8px;height:179px;border:1px solid #6e6e6e;box-sizing:border-box;background:#fff"></div>
<div style="position:absolute;left:1151px;top:238.5px;width:1px;height:23px;background:#e3e3e3"></div><div style="position:absolute;left:1181px;top:238.5px;width:1px;height:23px;background:#e3e3e3"></div>
<div style="position:absolute;left:952px;top:261.7px;width:395.8px;height:22.3px;background:#d9d9d9"></div>
<span class="t" style="left:958.3px;top:243.84px;font-size:12px;color:#000;transform:scaleX(1.0425);">Nombre</span>
<span class="t" style="left:1245.5px;top:243.84px;font-size:12px;color:#000;transform:scaleX(0.9782);">Edición</span>
<span class="t" style="left:971.8px;top:267.14px;font-size:12px;color:#f4f4f4;transform:scaleX(0.9695);">Cuerpo1.stl</span>
<div style="position:absolute;left:951px;top:429.5px;width:397.5px;height:166px;border:1px solid #dcdcdc;box-sizing:border-box"></div>
<div style="position:absolute;left:960px;top:424px;width:140px;height:12px;background:#fff"></div>
<span class="t" style="left:963.5px;top:423.84px;font-size:12px;color:#000;font-weight:700;transform:scaleX(0.9535);">Manipulación de objetos</span>
<div style="position:absolute;left:959.7px;top:443.3px;width:149.7px;height:23.9px;border:1px solid #7a7a7a;border-radius:2.5px;box-sizing:border-box;background:#fff"></div>
<span class="t" style="left:973.4px;top:448.84px;font-size:12px;color:#000;">Coordenadas mundial</span>
<span class="t" style="left:1129.0px;top:447.49px;font-size:12.3px;color:#000;font-weight:700;transform:scaleX(0.9630);">X</span>
<span class="t" style="left:1192.8px;top:447.49px;font-size:12.3px;color:#000;font-weight:700;transform:scaleX(0.9265);">Y</span>
<span class="t" style="left:1255.0px;top:447.49px;font-size:12.3px;color:#000;font-weight:700;transform:scaleX(0.9580);">Z</span>
<span class="t" style="left:960.4px;top:474.84px;font-size:12px;color:#000;transform:scaleX(0.9691);">Posición:</span>
<div style="position:absolute;left:1113.0px;top:469.5px;width:60px;height:22.3px;border:1.4px solid #6f6f6f;box-sizing:border-box;background:#fff"></div>
<span class="t" style="left:1119.0px;top:472.99px;font-size:12.3px;color:#000;transform:scaleX(0.8231);">125</span>
<div style="position:absolute;left:1176.0px;top:469.5px;width:60px;height:22.3px;border:1.4px solid #6f6f6f;box-sizing:border-box;background:#fff"></div>
<span class="t" style="left:1182.0px;top:472.99px;font-size:12.3px;color:#000;transform:scaleX(0.8231);">105</span>
<div style="position:absolute;left:1239.3px;top:469.5px;width:60px;height:22.3px;border:1.4px solid #6f6f6f;box-sizing:border-box;background:#fff"></div>
<span class="t" style="left:1245.3px;top:472.99px;font-size:12.3px;color:#000;transform:scaleX(0.8447);">64,83</span>
<span class="t" style="left:1302.5px;top:474.84px;font-size:12px;color:#000;">mm</span>
<span class="t" style="left:960.4px;top:501.39px;font-size:12px;color:#000;transform:scaleX(0.9686);">Girar (relativo):</span>
<div style="position:absolute;left:1113.0px;top:495.4px;width:60px;height:22.3px;border:1.4px solid #6f6f6f;box-sizing:border-box;background:#fff"></div>
<span class="t" style="left:1119.0px;top:498.84px;font-size:12.3px;color:#000;transform:scaleX(0.8183);">0</span>
<div style="position:absolute;left:1176.0px;top:495.4px;width:60px;height:22.3px;border:1.4px solid #6f6f6f;box-sizing:border-box;background:#fff"></div>
<span class="t" style="left:1182.0px;top:498.84px;font-size:12.3px;color:#000;transform:scaleX(0.8183);">0</span>
<div style="position:absolute;left:1239.3px;top:495.4px;width:60px;height:22.3px;border:1.4px solid #6f6f6f;box-sizing:border-box;background:#fff"></div>
<span class="t" style="left:1245.3px;top:498.84px;font-size:12.3px;color:#000;transform:scaleX(0.8183);">0</span>
<span class="t" style="left:1302.5px;top:501.39px;font-size:12px;color:#000;transform:scaleX(0.9351);">°</span>
<span class="t" style="left:980.4px;top:527.24px;font-size:12px;color:#000;transform:scaleX(0.9311);">Factores de escala:</span>
<div style="position:absolute;left:1113.0px;top:521.2px;width:60px;height:22.3px;border:1.4px solid #6f6f6f;box-sizing:border-box;background:#fff"></div>
<span class="t" style="left:1119.0px;top:524.69px;font-size:12.3px;color:#000;transform:scaleX(0.8231);">100</span>
<div style="position:absolute;left:1176.0px;top:521.2px;width:60px;height:22.3px;border:1.4px solid #6f6f6f;box-sizing:border-box;background:#fff"></div>
<span class="t" style="left:1182.0px;top:524.69px;font-size:12.3px;color:#000;transform:scaleX(0.8231);">100</span>
<div style="position:absolute;left:1239.3px;top:521.2px;width:60px;height:22.3px;border:1.4px solid #6f6f6f;box-sizing:border-box;background:#fff"></div>
<span class="t" style="left:1245.3px;top:524.69px;font-size:12.3px;color:#000;transform:scaleX(0.8231);">100</span>
<span class="t" style="left:1302.5px;top:527.24px;font-size:12px;color:#000;transform:scaleX(0.8902);">%</span>
<span class="t" style="left:980.4px;top:553.29px;font-size:12px;color:#000;transform:scaleX(1.0138);">Tamaño [Mundo]:</span>
<div style="position:absolute;left:1113.0px;top:547.0px;width:60px;height:22.3px;border:1.4px solid #6f6f6f;box-sizing:border-box;background:#fff"></div>
<span class="t" style="left:1119.0px;top:550.54px;font-size:12.3px;color:#000;transform:scaleX(0.8231);">170</span>
<div style="position:absolute;left:1176.0px;top:547.0px;width:60px;height:22.3px;border:1.4px solid #6f6f6f;box-sizing:border-box;background:#fff"></div>
<span class="t" style="left:1182.0px;top:550.54px;font-size:12.3px;color:#000;transform:scaleX(0.8146);">70,4</span>
<div style="position:absolute;left:1239.3px;top:547.0px;width:60px;height:22.3px;border:1.4px solid #6f6f6f;box-sizing:border-box;background:#fff"></div>
<span class="t" style="left:1245.3px;top:550.54px;font-size:12.3px;color:#000;transform:scaleX(0.8399);">129,66</span>
<span class="t" style="left:1302.5px;top:553.29px;font-size:12px;color:#000;">mm</span>
<div style="position:absolute;left:960.4px;top:575px;width:12.3px;height:12.3px;border:1px solid #858585;border-radius:3px;box-sizing:border-box;background:#f2f2f2"></div>
<span class="t" style="left:976.7px;top:576.34px;font-size:12px;color:#000;transform:scaleX(0.9491);">Pulgadas</span>
<div style="position:absolute;left:951px;top:610px;width:397.5px;height:60px;border:1px solid #dcdcdc;border-bottom:none;box-sizing:border-box"></div>
<div style="position:absolute;left:957px;top:604px;width:29px;height:12px;background:#fff"></div>
<span class="t" style="left:960.4px;top:604.84px;font-size:12px;color:#000;font-weight:700;transform:scaleX(1.0091);">Info</span>
<span class="t" style="left:956.7px;top:621.54px;font-size:12px;color:#000;transform:scaleX(0.9667);">Tamaño:</span>
<span class="t" style="left:1017.5px;top:621.54px;font-size:12px;color:#000;transform:scaleX(0.9039);">170,00 x 70,40 x 129,66</span>
<span class="t" style="left:1149.3px;top:621.54px;font-size:12px;color:#000;transform:scaleX(0.9891);">Volumen:</span>
<span class="t" style="left:1215.3px;top:621.54px;font-size:12px;color:#000;transform:scaleX(0.8989);">267518,16</span>
<span class="t" style="left:956.7px;top:643.04px;font-size:12px;color:#000;transform:scaleX(0.9016);">Facetas:</span>
<span class="t" style="left:1017.5px;top:643.04px;font-size:12px;color:#000;transform:scaleX(0.9097);">18542 (1 carcasa)</span>
<div style="position:absolute;left:950px;top:659px;width:416px;height:4.6px;background:#fff"></div>
<div style="position:absolute;left:950.5px;top:663.6px;width:415.5px;height:31.4px;background:#e4e4e4"></div>
<span class="t" style="left:1108.3px;top:673.84px;font-size:12px;color:#ea6a20;font-weight:700;transform:scaleX(0.9485);">Exportar código G</span>
<svg style="position:absolute;left:940px;top:46px" width="426" height="649" viewBox="940 46 426 649"><path d="M1313.9 73.4L1317.8 77.4L1321.7 73.4" fill="none" stroke="#505050" stroke-width="1"/><g transform="translate(1337.9 73.9)" ><path d="M-1.91 -5.56 L-1.31 -6.81 L1.31 -6.81 L1.91 -5.56 L2.59 -5.28 L3.89 -5.74 L5.74 -3.89 L5.28 -2.59 L5.56 -1.91 L6.81 -1.31 L6.81 1.31 L5.56 1.91 L5.28 2.59 L5.74 3.89 L3.89 5.74 L2.59 5.28 L1.91 5.56 L1.31 6.81 L-1.31 6.81 L-1.91 5.56 L-2.59 5.28 L-3.89 5.74 L-5.74 3.89 L-5.28 2.59 L-5.56 1.91 L-6.81 1.31 L-6.81 -1.31 L-5.56 -1.91 L-5.28 -2.59 L-5.74 -3.89 L-3.89 -5.74 L-2.59 -5.28Z M4.58 0A4.58 4.58 0 1 0 -4.58 0A4.58 4.58 0 1 0 4.58 0Z" fill="#6c6c6c" fill-rule="evenodd"/><circle r="3.29" fill="none" stroke="#e8915a" stroke-width="1.08" /></g><path d="M1313.9 116.6L1317.8 120.6L1321.7 116.6" fill="none" stroke="#505050" stroke-width="1"/><g transform="translate(1337.9 117.1)" ><path d="M-1.91 -5.56 L-1.31 -6.81 L1.31 -6.81 L1.91 -5.56 L2.59 -5.28 L3.89 -5.74 L5.74 -3.89 L5.28 -2.59 L5.56 -1.91 L6.81 -1.31 L6.81 1.31 L5.56 1.91 L5.28 2.59 L5.74 3.89 L3.89 5.74 L2.59 5.28 L1.91 5.56 L1.31 6.81 L-1.31 6.81 L-1.91 5.56 L-2.59 5.28 L-3.89 5.74 L-5.74 3.89 L-5.28 2.59 L-5.56 1.91 L-6.81 1.31 L-6.81 -1.31 L-5.56 -1.91 L-5.28 -2.59 L-5.74 -3.89 L-3.89 -5.74 L-2.59 -5.28Z M4.58 0A4.58 4.58 0 1 0 -4.58 0A4.58 4.58 0 1 0 4.58 0Z" fill="#6c6c6c" fill-rule="evenodd"/><circle r="3.29" fill="none" stroke="#e8915a" stroke-width="1.08" /></g><path d="M1313.9 159.8L1317.8 163.8L1321.7 159.8" fill="none" stroke="#505050" stroke-width="1"/><g transform="translate(1337.9 160.3)" ><path d="M-1.91 -5.56 L-1.31 -6.81 L1.31 -6.81 L1.91 -5.56 L2.59 -5.28 L3.89 -5.74 L5.74 -3.89 L5.28 -2.59 L5.56 -1.91 L6.81 -1.31 L6.81 1.31 L5.56 1.91 L5.28 2.59 L5.74 3.89 L3.89 5.74 L2.59 5.28 L1.91 5.56 L1.31 6.81 L-1.31 6.81 L-1.91 5.56 L-2.59 5.28 L-3.89 5.74 L-5.74 3.89 L-5.28 2.59 L-5.56 1.91 L-6.81 1.31 L-6.81 -1.31 L-5.56 -1.91 L-5.28 -2.59 L-5.74 -3.89 L-3.89 -5.74 L-2.59 -5.28Z M4.58 0A4.58 4.58 0 1 0 -4.58 0A4.58 4.58 0 1 0 4.58 0Z" fill="#6c6c6c" fill-rule="evenodd"/><circle r="3.29" fill="none" stroke="#e8915a" stroke-width="1.08" /></g><path d="M1313.9 190.6L1317.8 194.6L1321.7 190.6" fill="none" stroke="#505050" stroke-width="1"/><path d="M1064.1 217.4L1068 221.4L1071.9 217.4" fill="none" stroke="#505050" stroke-width="1"/><path d="M1096.9 453.6L1100.8 457.6L1104.7 453.6" fill="none" stroke="#505050" stroke-width="1"/><g transform="translate(969.7 74.5)" ><path d="M-1.80 -5.24 L-1.23 -6.42 L1.23 -6.42 L1.80 -5.24 L2.44 -4.98 L3.66 -5.41 L5.41 -3.66 L4.98 -2.44 L5.24 -1.80 L6.42 -1.23 L6.42 1.23 L5.24 1.80 L4.98 2.44 L5.41 3.66 L3.66 5.41 L2.44 4.98 L1.80 5.24 L1.23 6.42 L-1.23 6.42 L-1.80 5.24 L-2.44 4.98 L-3.66 5.41 L-5.41 3.66 L-4.98 2.44 L-5.24 1.80 L-6.42 1.23 L-6.42 -1.23 L-5.24 -1.80 L-4.98 -2.44 L-5.41 -3.66 L-3.66 -5.41 L-2.44 -4.98Z M4.32 0A4.32 4.32 0 1 0 -4.32 0A4.32 4.32 0 1 0 4.32 0Z" fill="#8a8a8a" fill-rule="evenodd"/><circle r="3.10" fill="none" stroke="#e29a6c" stroke-width="1.02" /></g><rect x="963.5" y="155" width="13" height="12" fill="#f6f6f6" stroke="#7e7e7e" stroke-width="1"/><path d="M963.5 158.6H976.5" stroke="#7e7e7e" stroke-width="1"/><circle cx="967.2" cy="158.6" r="1.9" fill="#e8672a"/><path d="M963.5 167H976.5" stroke="#666" stroke-width="1.4"/><path d="M1160.6 273C1162.6 269.8 1164.8 268.7 1167 268.7C1169.2 268.7 1171.4 269.8 1173.4 273C1171.4 276.2 1169.2 277.3 1167 277.3C1164.8 277.3 1162.6 276.2 1160.6 273Z" fill="none" stroke="#6e6e6e" stroke-width="1.7"/><circle cx="1167" cy="273" r="2.1" fill="#6e6e6e"/><path d="M1263 269.5H1260.6A1.6 1.6 0 0 0 1259 271.1V277.4A1.6 1.6 0 0 0 1260.6 279H1266.9A1.6 1.6 0 0 0 1268.5 277.4V275" fill="none" stroke="#757575" stroke-width="1.3"/><circle cx="1267.4" cy="270.2" r="2.5" fill="none" stroke="#ea7a3a" stroke-width="1.5"/><path d="M1147.0 448.8H1144.8A2 2 0 0 0 1142.8 450.8V457A2 2 0 0 0 1144.8 459H1147.0M1151.0 448.8H1153.2A2 2 0 0 1 1155.2 450.8V457A2 2 0 0 1 1153.2 459H1151.0" fill="none" stroke="#000" stroke-width="1.9"/><ellipse cx="1149.0" cy="453.8" rx="0.9" ry="1.5" fill="#8a8a8a"/><circle cx="1149.0" cy="447.9" r="0.8" fill="#a0a0a0"/><circle cx="1149.0" cy="459.9" r="0.8" fill="#a0a0a0"/><path d="M1209.0 448.8H1206.8A2 2 0 0 0 1204.8 450.8V457A2 2 0 0 0 1206.8 459H1209.0M1213.0 448.8H1215.2A2 2 0 0 1 1217.2 450.8V457A2 2 0 0 1 1215.2 459H1213.0" fill="none" stroke="#000" stroke-width="1.9"/><ellipse cx="1211.0" cy="453.8" rx="0.9" ry="1.5" fill="#8a8a8a"/><circle cx="1211.0" cy="447.9" r="0.8" fill="#a0a0a0"/><circle cx="1211.0" cy="459.9" r="0.8" fill="#a0a0a0"/><path d="M1272.0 448.8H1269.8A2 2 0 0 0 1267.8 450.8V457A2 2 0 0 0 1269.8 459H1272.0M1276.0 448.8H1278.2A2 2 0 0 1 1280.2 450.8V457A2 2 0 0 1 1278.2 459H1276.0" fill="none" stroke="#000" stroke-width="1.9"/><ellipse cx="1274.0" cy="453.8" rx="0.9" ry="1.5" fill="#8a8a8a"/><circle cx="1274.0" cy="447.9" r="0.8" fill="#a0a0a0"/><circle cx="1274.0" cy="459.9" r="0.8" fill="#a0a0a0"/><path d="M964.9 546V542.7A3.1 3.1 0 0 1 971.1 542.7V546" fill="none" stroke="#858585" stroke-width="2"/><rect x="962.1" y="545.7" width="11.8" height="6.9" rx="0.8" fill="#858585"/><path d="M966.3 549.3H968.3" stroke="#fff" stroke-width="1.3"/><path d="M968 548.3L969.6 549.3L968 550.3Z" fill="#fff"/></svg>
</body></html>
